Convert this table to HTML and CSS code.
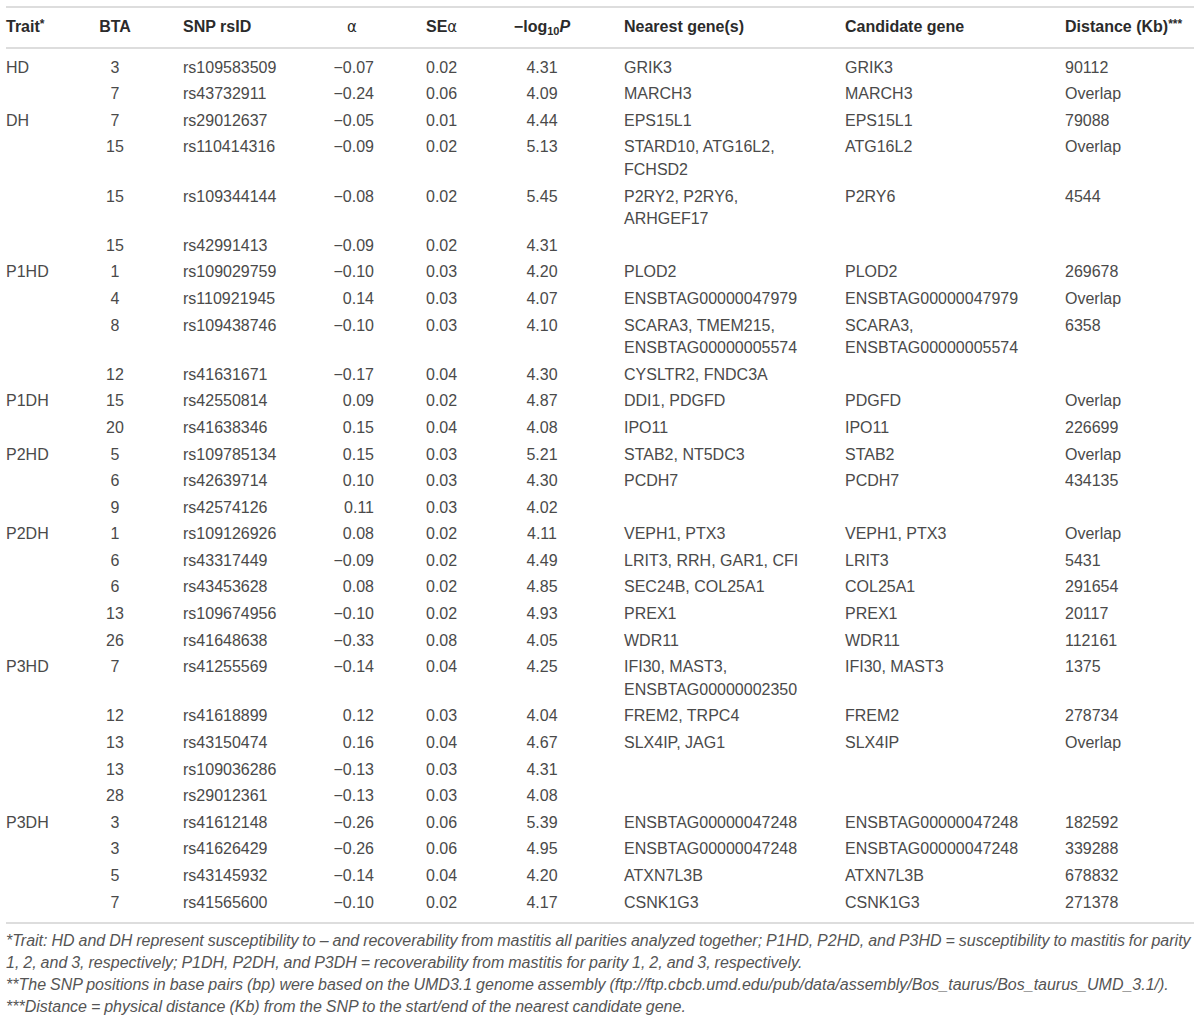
FILE: index.html
```html
<!DOCTYPE html>
<html lang="en">
<head>
    <meta charset="UTF-8">
    <meta name="viewport" content="width=device-width, initial-scale=1.0">
    <title>Significant SNPs for mastitis traits</title>
    <link rel="stylesheet" href="styles.css">
</head>
<body>
    <div id="wrapper">
        <table class="snp-table">
            <colgroup>
                <col class="c-trait">
                <col class="c-bta">
                <col class="c-snp">
                <col class="c-alpha">
                <col class="c-se">
                <col class="c-logp">
                <col class="c-near">
                <col class="c-cand">
                <col class="c-dist">
            </colgroup>
            <thead>
                <tr>
                    <th class="trait">Trait<sup>*</sup></th>
                    <th class="bta">BTA</th>
                    <th class="snp">SNP rsID</th>
                    <th class="alpha-head"><span class="greek">α</span></th>
                    <th class="se">SE<span class="greek">α</span></th>
                    <th class="logp">−log<sub>10</sub><i>P</i></th>
                    <th class="near">Nearest gene(s)</th>
                    <th class="cand">Candidate gene</th>
                    <th class="dist">Distance (Kb)<sup>***</sup></th>
                </tr>
            </thead>
            <tbody>
                <tr class="first"><td class="trait">HD</td><td class="bta">3</td><td class="snp">rs109583509</td><td class="alpha">−0.07</td><td class="se">0.02</td><td class="logp">4.31</td><td class="near">GRIK3</td><td class="cand">GRIK3</td><td class="dist">90112</td></tr>
                <tr><td class="trait"></td><td class="bta">7</td><td class="snp">rs43732911</td><td class="alpha">−0.24</td><td class="se">0.06</td><td class="logp">4.09</td><td class="near">MARCH3</td><td class="cand">MARCH3</td><td class="dist">Overlap</td></tr>
                <tr><td class="trait">DH</td><td class="bta">7</td><td class="snp">rs29012637</td><td class="alpha">−0.05</td><td class="se">0.01</td><td class="logp">4.44</td><td class="near">EPS15L1</td><td class="cand">EPS15L1</td><td class="dist">79088</td></tr>
                <tr><td class="trait"></td><td class="bta">15</td><td class="snp">rs110414316</td><td class="alpha">−0.09</td><td class="se">0.02</td><td class="logp">5.13</td><td class="near">STARD10, ATG16L2,<br>FCHSD2</td><td class="cand">ATG16L2</td><td class="dist">Overlap</td></tr>
                <tr><td class="trait"></td><td class="bta">15</td><td class="snp">rs109344144</td><td class="alpha">−0.08</td><td class="se">0.02</td><td class="logp">5.45</td><td class="near">P2RY2, P2RY6,<br>ARHGEF17</td><td class="cand">P2RY6</td><td class="dist">4544</td></tr>
                <tr><td class="trait"></td><td class="bta">15</td><td class="snp">rs42991413</td><td class="alpha">−0.09</td><td class="se">0.02</td><td class="logp">4.31</td><td class="near"></td><td class="cand"></td><td class="dist"></td></tr>
                <tr><td class="trait">P1HD</td><td class="bta">1</td><td class="snp">rs109029759</td><td class="alpha">−0.10</td><td class="se">0.03</td><td class="logp">4.20</td><td class="near">PLOD2</td><td class="cand">PLOD2</td><td class="dist">269678</td></tr>
                <tr><td class="trait"></td><td class="bta">4</td><td class="snp">rs110921945</td><td class="alpha">0.14</td><td class="se">0.03</td><td class="logp">4.07</td><td class="near">ENSBTAG00000047979</td><td class="cand">ENSBTAG00000047979</td><td class="dist">Overlap</td></tr>
                <tr><td class="trait"></td><td class="bta">8</td><td class="snp">rs109438746</td><td class="alpha">−0.10</td><td class="se">0.03</td><td class="logp">4.10</td><td class="near">SCARA3, TMEM215,<br>ENSBTAG00000005574</td><td class="cand">SCARA3,<br>ENSBTAG00000005574</td><td class="dist">6358</td></tr>
                <tr><td class="trait"></td><td class="bta">12</td><td class="snp">rs41631671</td><td class="alpha">−0.17</td><td class="se">0.04</td><td class="logp">4.30</td><td class="near">CYSLTR2, FNDC3A</td><td class="cand"></td><td class="dist"></td></tr>
                <tr><td class="trait">P1DH</td><td class="bta">15</td><td class="snp">rs42550814</td><td class="alpha">0.09</td><td class="se">0.02</td><td class="logp">4.87</td><td class="near">DDI1, PDGFD</td><td class="cand">PDGFD</td><td class="dist">Overlap</td></tr>
                <tr><td class="trait"></td><td class="bta">20</td><td class="snp">rs41638346</td><td class="alpha">0.15</td><td class="se">0.04</td><td class="logp">4.08</td><td class="near">IPO11</td><td class="cand">IPO11</td><td class="dist">226699</td></tr>
                <tr><td class="trait">P2HD</td><td class="bta">5</td><td class="snp">rs109785134</td><td class="alpha">0.15</td><td class="se">0.03</td><td class="logp">5.21</td><td class="near">STAB2, NT5DC3</td><td class="cand">STAB2</td><td class="dist">Overlap</td></tr>
                <tr><td class="trait"></td><td class="bta">6</td><td class="snp">rs42639714</td><td class="alpha">0.10</td><td class="se">0.03</td><td class="logp">4.30</td><td class="near">PCDH7</td><td class="cand">PCDH7</td><td class="dist">434135</td></tr>
                <tr><td class="trait"></td><td class="bta">9</td><td class="snp">rs42574126</td><td class="alpha">0.11</td><td class="se">0.03</td><td class="logp">4.02</td><td class="near"></td><td class="cand"></td><td class="dist"></td></tr>
                <tr><td class="trait">P2DH</td><td class="bta">1</td><td class="snp">rs109126926</td><td class="alpha">0.08</td><td class="se">0.02</td><td class="logp">4.11</td><td class="near">VEPH1, PTX3</td><td class="cand">VEPH1, PTX3</td><td class="dist">Overlap</td></tr>
                <tr><td class="trait"></td><td class="bta">6</td><td class="snp">rs43317449</td><td class="alpha">−0.09</td><td class="se">0.02</td><td class="logp">4.49</td><td class="near">LRIT3, RRH, GAR1, CFI</td><td class="cand">LRIT3</td><td class="dist">5431</td></tr>
                <tr><td class="trait"></td><td class="bta">6</td><td class="snp">rs43453628</td><td class="alpha">0.08</td><td class="se">0.02</td><td class="logp">4.85</td><td class="near">SEC24B, COL25A1</td><td class="cand">COL25A1</td><td class="dist">291654</td></tr>
                <tr><td class="trait"></td><td class="bta">13</td><td class="snp">rs109674956</td><td class="alpha">−0.10</td><td class="se">0.02</td><td class="logp">4.93</td><td class="near">PREX1</td><td class="cand">PREX1</td><td class="dist">20117</td></tr>
                <tr><td class="trait"></td><td class="bta">26</td><td class="snp">rs41648638</td><td class="alpha">−0.33</td><td class="se">0.08</td><td class="logp">4.05</td><td class="near">WDR11</td><td class="cand">WDR11</td><td class="dist">112161</td></tr>
                <tr><td class="trait">P3HD</td><td class="bta">7</td><td class="snp">rs41255569</td><td class="alpha">−0.14</td><td class="se">0.04</td><td class="logp">4.25</td><td class="near">IFI30, MAST3,<br>ENSBTAG00000002350</td><td class="cand">IFI30, MAST3</td><td class="dist">1375</td></tr>
                <tr><td class="trait"></td><td class="bta">12</td><td class="snp">rs41618899</td><td class="alpha">0.12</td><td class="se">0.03</td><td class="logp">4.04</td><td class="near">FREM2, TRPC4</td><td class="cand">FREM2</td><td class="dist">278734</td></tr>
                <tr><td class="trait"></td><td class="bta">13</td><td class="snp">rs43150474</td><td class="alpha">0.16</td><td class="se">0.04</td><td class="logp">4.67</td><td class="near">SLX4IP, JAG1</td><td class="cand">SLX4IP</td><td class="dist">Overlap</td></tr>
                <tr><td class="trait"></td><td class="bta">13</td><td class="snp">rs109036286</td><td class="alpha">−0.13</td><td class="se">0.03</td><td class="logp">4.31</td><td class="near"></td><td class="cand"></td><td class="dist"></td></tr>
                <tr><td class="trait"></td><td class="bta">28</td><td class="snp">rs29012361</td><td class="alpha">−0.13</td><td class="se">0.03</td><td class="logp">4.08</td><td class="near"></td><td class="cand"></td><td class="dist"></td></tr>
                <tr><td class="trait">P3DH</td><td class="bta">3</td><td class="snp">rs41612148</td><td class="alpha">−0.26</td><td class="se">0.06</td><td class="logp">5.39</td><td class="near">ENSBTAG00000047248</td><td class="cand">ENSBTAG00000047248</td><td class="dist">182592</td></tr>
                <tr><td class="trait"></td><td class="bta">3</td><td class="snp">rs41626429</td><td class="alpha">−0.26</td><td class="se">0.06</td><td class="logp">4.95</td><td class="near">ENSBTAG00000047248</td><td class="cand">ENSBTAG00000047248</td><td class="dist">339288</td></tr>
                <tr><td class="trait"></td><td class="bta">5</td><td class="snp">rs43145932</td><td class="alpha">−0.14</td><td class="se">0.04</td><td class="logp">4.20</td><td class="near">ATXN7L3B</td><td class="cand">ATXN7L3B</td><td class="dist">678832</td></tr>
                <tr class="last"><td class="trait"></td><td class="bta">7</td><td class="snp">rs41565600</td><td class="alpha">−0.10</td><td class="se">0.02</td><td class="logp">4.17</td><td class="near">CSNK1G3</td><td class="cand">CSNK1G3</td><td class="dist">271378</td></tr>
            </tbody>
        </table>

        <div class="notes">
            <p>*Trait: HD and DH represent susceptibility to – and recoverability from mastitis all parities analyzed together; P1HD, P2HD, and P3HD = susceptibility to mastitis for parity 1, 2, and 3, respectively; P1DH, P2DH, and P3DH = recoverability from mastitis for parity 1, 2, and 3, respectively.</p>
            <p>**The SNP positions in base pairs (bp) were based on the UMD3.1 genome assembly (ftp://ftp.cbcb.umd.edu/pub/data/assembly/Bos_taurus/Bos_taurus_UMD_3.1/).</p>
            <p>***Distance = physical distance (Kb) from the SNP to the start/end of the nearest candidate gene.</p>
        </div>
    </div>
</body>
</html>
```

FILE: styles.css
```css
body {
    margin: 0;
    background: #ffffff;
    font-family: "Liberation Sans", Arial, Helvetica, sans-serif;
    font-size: 16px;
    color: #4a4a4a;
}

#wrapper {
    padding: 6px 6px 0 6px;
}

.snp-table {
    width: 100%;
    border-collapse: collapse;
    table-layout: fixed;
}

/* column widths */
.c-trait { width: 60px; }
.c-bta { width: 98px; }
.c-snp { width: 136px; }
.c-alpha { width: 110px; }
.c-se { width: 70px; }
.c-logp { width: 124px; }
.c-near { width: 221px; }
.c-cand { width: 220px; }
.c-dist { width: 149px; }

.snp-table th,
.snp-table td {
    padding: 2px 0;
    line-height: 22.6px;
    text-align: left;
    vertical-align: top;
    font-weight: normal;
    white-space: nowrap;
}

.snp-table thead tr {
    border-top: 2px solid #dddddd;
    border-bottom: 2px solid #dddddd;
}

.snp-table th {
    padding: 8px 0 8px 0;
    font-weight: bold;
    color: #2b2b2b;
}

.snp-table tbody tr.first td { padding-top: 8px; }
.snp-table tbody tr.last td { padding-bottom: 8px; }
.snp-table tbody tr.last { border-bottom: 2px solid #dddddd; }

.snp-table .bta { text-align: center; }
.snp-table .snp { padding-left: 19px; }
.snp-table .alpha { text-align: right; padding-right: 36px; }
.snp-table .alpha-head { text-align: center; padding-right: 6px; }
.snp-table .se { padding-left: 16px; }
.snp-table .logp { text-align: center; }
.snp-table .near { padding-left: 20px; }
.snp-table .cand { padding-left: 20px; }
.snp-table .dist { padding-left: 20px; }

.greek {
    font-family: "DejaVu Sans", sans-serif;
    font-weight: normal;
    font-size: 15px;
}

th sup {
    font-size: 12px;
    vertical-align: 4px;
    line-height: 0;
}

th sub {
    font-size: 11px;
    vertical-align: -3px;
    line-height: 0;
}

.notes {
    padding-top: 6px;
    font-style: italic;
    color: #555555;
    word-spacing: -0.5px;
}

.notes p {
    margin: 0;
    line-height: 22px;
}
```
